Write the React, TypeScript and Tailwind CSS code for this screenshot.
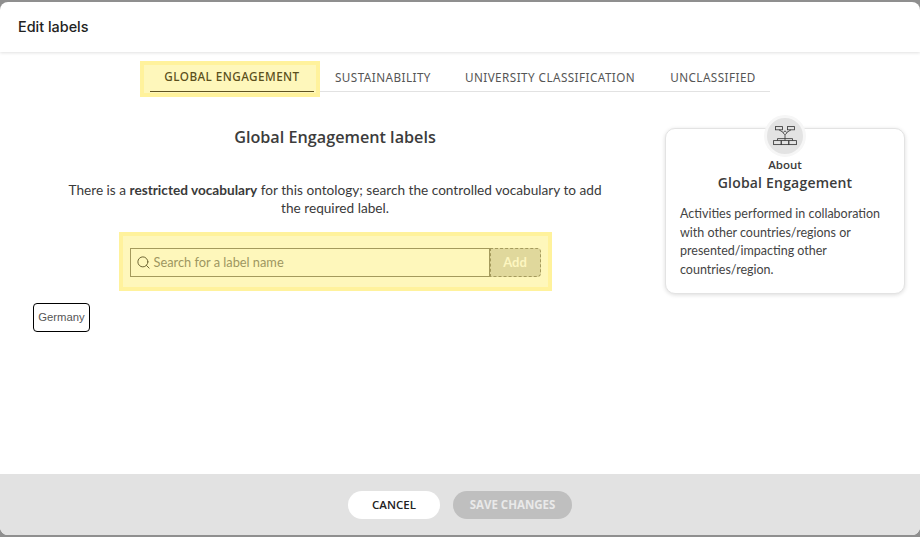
import React from 'react';
import { Search } from 'lucide-react';

const OrgIcon: React.FC = () => (
  <svg viewBox="0 0 24 20" className="w-[24px] h-[20px]" fill="none" stroke="#3a3a3a" strokeWidth="0.85">
    <rect x="2.5" y="0.6" width="7" height="3.2" />
    <rect x="14.5" y="0.6" width="7" height="3.2" />
    <path d="M6 3.8 L10.2 6.4 M18 3.8 L13.8 6.4" />
    <path d="M12 4.8 L14 6.8 L12 8.8 L10 6.8 Z" />
    <path d="M12 8.8 V14.6 M4.5 14.6 V12.6 H19.5 V14.6" />
    <rect x="0.6" y="14.6" width="7.6" height="4" />
    <rect x="8.2" y="14.6" width="7.6" height="4" />
    <rect x="15.8" y="14.6" width="7.6" height="4" />
  </svg>
);

const tabClass = "font-['Noto_Sans',sans-serif] text-[11.7px] tracking-[0.45px] uppercase pt-[7px] pb-[5px] whitespace-nowrap";

export default function App() {
  return (
    <div className="h-[537px] w-[920px] bg-[#8f8f8f] pt-[2px] pb-[2px] font-['Lato',sans-serif] overflow-hidden">
      <div className="h-full bg-white rounded-[8px] flex flex-col overflow-hidden">
        <header className="h-[50px] shrink-0 flex items-center px-[18px] shadow-[0_1px_3px_rgba(0,0,0,0.12)] relative">
          <h1 className="font-['Inter',sans-serif] text-[14.4px] font-medium text-[#222]">Edit labels</h1>
        </header>

        <main className="flex-1 flex flex-col">
          <nav className="w-[620px] mx-auto mt-[9px] h-[31px] flex border-b border-[#e2e2e2] text-[#555]">
            <div className="relative w-[164px] flex justify-center">
              <span className="absolute left-[-10px] right-[-6px] top-0 h-[36px] bg-[#fef7bb] border-[4px] border-[#fff29c]" />
              <span className={`${tabClass} relative text-[#5a4f1c] font-medium`}>Global Engagement</span>
              <span className="absolute left-0 right-0 bottom-[-1px] h-[1px] bg-[#5f5320]" />
            </div>
            <div className={`${tabClass} pt-[8px] ml-[21px]`}>Sustainability</div>
            <div className={`${tabClass} pt-[8px] ml-[34px]`}>University Classification</div>
            <div className={`${tabClass} pt-[8px] ml-[35px]`}>Unclassified</div>
          </nav>

          <div className="flex flex-1">
            <section className="w-[665px] shrink-0 pl-[33px]">
              <div className="w-[604px] flex flex-col items-center">
                <h2 className="mt-[34px] font-['Open_Sans',sans-serif] text-[16.2px] leading-[22px] font-semibold text-[#3c3c3c]">
                  Global Engagement labels
                </h2>
                <p className="mt-[33px] w-[545px] text-center text-[13.65px] leading-[18px] text-[#3a3a3a]">
                  There is a <strong className="font-bold">restricted vocabulary</strong> for this ontology; search the controlled vocabulary to add the required label.
                </p>
                <div className="mt-[15px] w-[433px] h-[59px] bg-[#fef7bb] border-[4px] border-[#fff29c] pl-[7px] pr-[7px] pt-[12px] flex shrink-0">
                  <div className="w-[360px] h-[29px] border border-[#a49a5c] flex items-center pl-[5px] gap-[3px] shrink-0">
                    <Search className="w-[15px] h-[15px] text-[#6f6735]" strokeWidth={1.6} />
                    <span className="text-[12.8px] text-[#9d9660]">Search for a label name</span>
                  </div>
                  <div className="w-[51px] h-[29px] border border-dashed border-[#a49a5c] rounded-r-[4px] bg-[#e0d89c] flex items-center justify-center text-[13px] font-bold text-[#fdf6c0]">
                    Add
                  </div>
                </div>
              </div>
              <span className="mt-[12px] inline-flex items-center justify-center w-[57px] h-[29px] border border-black rounded-[4px] font-['Liberation_Sans',sans-serif] text-[11.3px] text-[#555]">
                Germany
              </span>
            </section>

            <aside className="relative mt-[36px] w-[240px] h-[166px] bg-white border border-[#e3e3e3] rounded-[10px] shadow-[0_1px_4px_rgba(0,0,0,0.14)] px-[14px] pt-[28px]">
              <div className="absolute left-[98px] top-[-14px] w-[42px] h-[42px] rounded-full bg-[#e3e3e3] border-[3px] border-[#f6f6f6] flex items-center justify-center">
                <OrgIcon />
              </div>
              <div className="text-center font-['Open_Sans',sans-serif] text-[#3c3c3c]">
                <div className="text-[11.5px] leading-[15px] font-semibold">About</div>
                <div className="text-[14px] leading-[20px] font-semibold mt-[1px] tracking-[0.2px]">Global Engagement</div>
              </div>
              <p className="mt-[12px] text-[12.5px] leading-[18.7px] text-[#444]">
                Activities performed in collaboration with other countries/regions or presented/impacting other countries/region.
              </p>
            </aside>
          </div>
        </main>

        <footer className="h-[61px] shrink-0 bg-[#e2e2e2] flex items-center justify-center gap-[13px] font-['Open_Sans',sans-serif] text-[11.5px] font-semibold">
          <button className="w-[92px] h-[28px] rounded-full bg-white text-[#222]">CANCEL</button>
          <button className="w-[119px] h-[28px] rounded-full bg-[#bfbfbf] text-[#e9e9e9] font-bold">SAVE CHANGES</button>
        </footer>
      </div>
    </div>
  );
}
